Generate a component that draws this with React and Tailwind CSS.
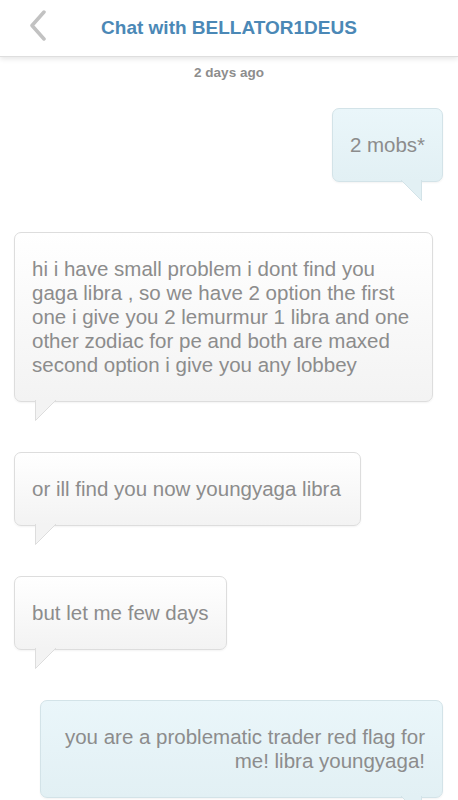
import React from "react";

const font = { fontFamily: '"Liberation Sans", Arial, sans-serif' };

/* ========================= */
/* TAIL */
/* ========================= */

function Tail({ side, fill, stroke }) {
    const isLeft = side === "left";
    return (
        <svg
            width="22"
            height="22"
            viewBox="0 0 22 22"
            className={
                isLeft
                    ? "absolute left-[20px] top-full -mt-[1px]"
                    : "absolute right-[20px] top-full -mt-[1px]"
            }
        >
            {isLeft ? (
                <>
                    <polygon points="0,0 0,21 21,0" fill={fill} />
                    <polyline points="0.5,0 0.5,20.5 21,0" fill="none" stroke={stroke} strokeWidth="1" />
                </>
            ) : (
                <>
                    <polygon points="1,0 22,21 22,0" fill={fill} />
                    <polyline points="1,0 21.5,20.5 21.5,0" fill="none" stroke={stroke} strokeWidth="1" />
                </>
            )}
        </svg>
    );
}

/* ========================= */
/* BUBBLES */
/* ========================= */

function LeftBubble({ width, children }) {
    return (
        <div
            className="relative self-start ml-[14px] rounded-[7px] border border-[#dddddd] bg-gradient-to-b from-white to-[#f3f3f3] px-[17px] py-[24px] text-[20.5px] leading-[24px] text-[#8c8c8c] shadow-[0_1px_2px_rgba(0,0,0,0.05)]"
            style={{ width }}
        >
            {children}
            <Tail side="left" fill="#f3f3f3" stroke="#dddddd" />
        </div>
    );
}

function RightBubble({ width, children }) {
    return (
        <div
            className="relative self-end mr-[15px] rounded-[7px] border border-[#d3e3e8] bg-gradient-to-b from-[#eaf6fa] to-[#e2f0f4] px-[17px] py-[24px] text-right text-[20.5px] leading-[24px] text-[#8c8c8c] shadow-[0_1px_2px_rgba(0,0,0,0.05)]"
            style={{ width }}
        >
            {children}
            <Tail side="right" fill="#e2f0f4" stroke="#d3e3e8" />
        </div>
    );
}

export default function App() {
    return (
        <div className="w-[458px] h-[800px] overflow-hidden bg-white" style={font}>

            {/* HEADER */}
            <div className="relative z-10 flex h-[57px] items-center justify-center border-b border-[#dedede] bg-white shadow-[0_2px_5px_rgba(0,0,0,0.10)]">
                <svg width="20" height="32" viewBox="0 0 20 32" className="absolute left-[28px] top-[10px]">
                    <polyline points="16,2 4,15.5 16,29" fill="none" stroke="#c2c2c2" strokeWidth="3.5" strokeLinecap="round" strokeLinejoin="round" />
                </svg>
                <h1 className="text-[19px] font-bold text-[#4b88b6]">
                    Chat with BELLATOR1DEUS
                </h1>
            </div>

            {/* DATE */}
            <p className="mt-[6px] text-center text-[13.5px] font-bold text-[#8d8d8d]">
                2 days ago
            </p>

            {/* MESSAGES */}
            <div className="mt-[25px] flex flex-col gap-[50px]">

                <RightBubble width="111px">
                    <span className="block whitespace-nowrap text-center -mx-[4px]">2 mobs*</span>
                </RightBubble>

                <LeftBubble width="419px">
                    hi i have small problem i dont find you
                    <br />
                    gaga libra , so we have 2 option the first
                    <br />
                    one i give you 2 lemurmur 1 libra and one
                    <br />
                    other zodiac for pe and both are maxed
                    <br />
                    second option i give you any lobbey
                </LeftBubble>

                <LeftBubble width="347px">
                    or ill find you now youngyaga libra
                </LeftBubble>

                <LeftBubble width="213px">
                    but let me few days
                </LeftBubble>

                <RightBubble width="403px">
                    <span className="whitespace-nowrap">you are a problematic trader red flag for</span>
                    <br />
                    me! libra youngyaga!
                </RightBubble>

            </div>
        </div>
    );
}
